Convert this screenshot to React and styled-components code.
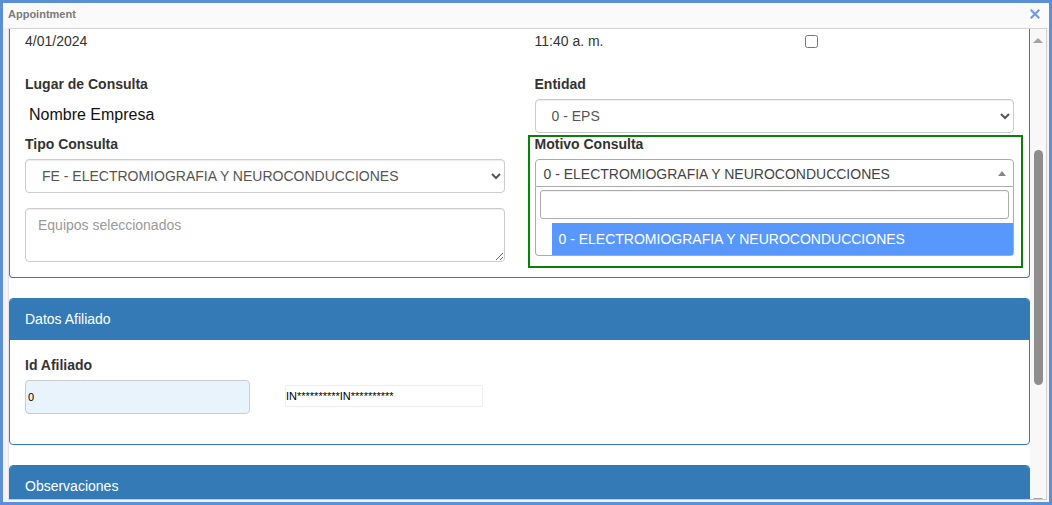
import React from "react"
import styled, { createGlobalStyle } from "styled-components"

const GlobalStyle = createGlobalStyle`
  html, body {
    margin: 0;
    padding: 0;
    background: #fff;
  }
  body {
    font-family: "Liberation Sans", Arial, sans-serif;
    font-size: 14px;
    line-height: 20px;
    color: #333;
  }
  * {
    box-sizing: border-box;
  }
`

const Window = styled.div`
  width: 1052px;
  height: 505px;
  border: 3px solid #5b8fd6;
  display: flex;
  flex-direction: column;
  background: #f3f3f3;
  overflow: hidden;
`

const TitleBar = styled.div`
  height: 25px;
  flex: none;
  display: flex;
  align-items: center;
  justify-content: space-between;
  padding: 0 8px 3px 5px;
  background: #fafafa;
`

const Title = styled.div`
  font-size: 11px;
  font-weight: bold;
  color: #7a7a7a;
`

const Close = styled.div`
  width: 10px;
  height: 10px;
  display: flex;
  margin-right: 1px;
`

const Body = styled.div`
  flex: 1;
  display: flex;
  padding: 0 2px 2px 5px;
  min-height: 0;
`

const ScrollArea = styled.div`
  flex: 1;
  display: flex;
  border-top: 1px solid #d2d2d2;
  border-left: 1px solid #e4e4e4;
  border-right: 1px solid #d2d2d2;
  border-bottom: 1px solid #c8c8c8;
  min-height: 0;
`

const Viewport = styled.div`
  flex: 1;
  background: #fff;
  overflow: hidden;
`

const Scrollbar = styled.div`
  width: 16px;
  flex: none;
  background: #f8f8f8;
  display: flex;
  flex-direction: column;
  align-items: center;
  overflow: hidden;
`

const Arrow = styled.div`
  width: 0;
  height: 0;
  border-left: 5px solid transparent;
  border-right: 5px solid transparent;
  ${p => p.$down
    ? "border-top: 5px solid #a3a3a3; margin-top: auto; margin-bottom: -4px;"
    : "border-bottom: 5px solid #a3a3a3; margin-top: 9px;"}
`

const Thumb = styled.div`
  width: 9px;
  height: 235px;
  margin-top: 107px;
  border-radius: 5px;
  background: #8e8e8e;
`

const Panel = styled.div`
  border: 1px solid #337ab7;
  border-radius: 4px;
  margin-bottom: 20px;
  ${p => p.$cut && "border-top: none; border-top-left-radius: 0; border-top-right-radius: 0;"}
`

const PanelHeading = styled.div`
  background: #337ab7;
  color: #fff;
  padding: 10px 15px;
  font-size: 14px;
  border-top-left-radius: 3px;
  border-top-right-radius: 3px;
  border-bottom: 1px solid #337ab7;
`

const PanelBody = styled.div`
  padding: ${p => p.$top || 15}px 15px ${p => p.$bottom || 15}px;
`

const Grid = styled.div`
  display: grid;
  grid-template-columns: 1fr 1fr;
  column-gap: 30px;
  row-gap: ${p => p.$rowGap || 0}px;
  margin-bottom: ${p => p.$mb || 0}px;
`

const Cell = styled.div`
  display: flex;
  flex-direction: column;
`

const TimeLine = styled.div`
  display: grid;
  grid-template-columns: 270px auto;
  align-items: center;
`

const Checkbox = styled.input`
  width: 13px;
  height: 13px;
  margin: 0;
`

const Label = styled.label`
  display: block;
  font-weight: bold;
  margin-bottom: 5px;
  ${p => p.$pull && "margin-top: -3px;"}
`

const StaticText = styled.div`
  height: 34px;
  display: flex;
  align-items: center;
  padding: 0 0 2px 4px;
  font-size: 16px;
  color: #111;
`

const Select = styled.select`
  height: 34px;
  width: 100%;
  padding: 6px 12px;
  font-family: inherit;
  font-size: 14px;
  color: #555;
  background: #fff;
  border: 1px solid #ccc;
  border-radius: 4px;
  box-shadow: inset 0 1px 1px rgba(0, 0, 0, 0.075);
`

const TextArea = styled.textarea`
  margin-top: 15px;
  height: 54px;
  width: 100%;
  padding: 6px 12px;
  font-family: inherit;
  font-size: 14px;
  line-height: 20px;
  border: 1px solid #ccc;
  border-radius: 4px;
  box-shadow: inset 0 1px 1px rgba(0, 0, 0, 0.075);
  display: block;
  &::placeholder {
    color: #999;
  }
`

const Highlight = styled.div`
  margin: 1px -9px 0 -7px;
  border: 2px solid #0a7f0a;
  padding: 0 7px 10px 5px;
`

const Select2Box = styled.div`
  height: 28px;
  border: 1px solid #aaa;
  border-radius: 4px 4px 0 0;
  display: flex;
  align-items: center;
  justify-content: space-between;
  padding: 2px 7px 0 8px;
  color: #444;
  font-size: 14px;
`

const UpArrow = styled.span`
  width: 0;
  height: 0;
  border-left: 4px solid transparent;
  border-right: 4px solid transparent;
  border-bottom: 5px solid #888;
  margin-top: -2px;
`

const Dropdown = styled.div`
  border: 1px solid #aaa;
  border-top: none;
  border-radius: 0 0 4px 4px;
  background: #fff;
`

const SearchWrap = styled.div`
  padding: 3px 4px 4px;
`

const SearchInput = styled.input`
  display: block;
  width: 100%;
  height: 29px;
  border: 1px solid #aaa;
  border-radius: 3px;
  box-shadow: inset 0 1px 1px rgba(0, 0, 0, 0.06);
`

const Option = styled.div`
  margin-left: 16px;
  padding: 6px 7px;
  background: #5897fb;
  color: #fff;
  font-size: 14px;
  line-height: 20px;
`

const FieldRow = styled.div`
  display: flex;
  align-items: center;
  gap: 35px;
  margin-bottom: 15px;
`

const Input = styled.input`
  font-family: inherit;
  font-size: 11px;
  color: #000;
  width: ${p => p.$w}px;
  height: ${p => p.$h}px;
  padding: 0 ${p => p.$pad}px;
  margin-bottom: ${p => p.$lift || 0}px;
  background: ${p => p.$bg || "#fff"};
  border: 1px solid ${p => p.$border || "#ccc"};
  border-radius: ${p => p.$radius || 0}px;
`

export default function App() {
  return (
    <>
      <GlobalStyle />
      <Window>
        <TitleBar>
          <Title>Appointment</Title>
          <Close>
            <svg width="10" height="10" viewBox="0 0 10 10">
              <path d="M1.5 1.5 L8.5 8.5 M8.5 1.5 L1.5 8.5" stroke="#6d9fdc" strokeWidth="2.2" strokeLinecap="square" />
            </svg>
          </Close>
        </TitleBar>
        <Body>
          <ScrollArea>
            <Viewport>
              <Panel $cut>
                <PanelBody $top={2} $bottom={9}>
                  <Grid $mb={23}>
                    <Cell>4/01/2024</Cell>
                    <TimeLine>
                      <span>11:40 a. m.</span>
                      <Checkbox type="checkbox" />
                    </TimeLine>
                  </Grid>
                  <Grid $rowGap={1}>
                    <Cell>
                      <Label>Lugar de Consulta</Label>
                      <StaticText>Nombre Empresa</StaticText>
                    </Cell>
                    <Cell>
                      <Label>Entidad</Label>
                      <Select defaultValue="0">
                        <option value="0">0 - EPS</option>
                      </Select>
                    </Cell>
                    <Cell>
                      <Label>Tipo Consulta</Label>
                      <Select defaultValue="FE">
                        <option value="FE">FE - ELECTROMIOGRAFIA Y NEUROCONDUCCIONES</option>
                      </Select>
                      <TextArea placeholder="Equipos seleccionados" />
                    </Cell>
                    <Cell>
                      <Highlight>
                        <Label $pull>Motivo Consulta</Label>
                        <Select2Box>
                          <span>0 - ELECTROMIOGRAFIA Y NEUROCONDUCCIONES</span>
                          <UpArrow />
                        </Select2Box>
                        <Dropdown>
                          <SearchWrap>
                            <SearchInput type="text" />
                          </SearchWrap>
                          <Option>0 - ELECTROMIOGRAFIA Y NEUROCONDUCCIONES</Option>
                        </Dropdown>
                      </Highlight>
                    </Cell>
                  </Grid>
                </PanelBody>
              </Panel>

              <Panel>
                <PanelHeading>Datos Afiliado</PanelHeading>
                <PanelBody>
                  <Label>Id Afiliado</Label>
                  <FieldRow>
                    <Input $w={225} $h={34} $pad={2} $bg="#e8f3fc" $radius={4} defaultValue="0" />
                    <Input $w={198} $h={22} $pad={0} $lift={3} $border="#eeeeee" $radius={2} defaultValue="IN**********IN**********" />
                  </FieldRow>
                </PanelBody>
              </Panel>

              <Panel>
                <PanelHeading>Observaciones</PanelHeading>
                <PanelBody />
              </Panel>
            </Viewport>
            <Scrollbar>
              <Arrow />
              <Thumb />
              <Arrow $down />
            </Scrollbar>
          </ScrollArea>
        </Body>
      </Window>
    </>
  )
}
